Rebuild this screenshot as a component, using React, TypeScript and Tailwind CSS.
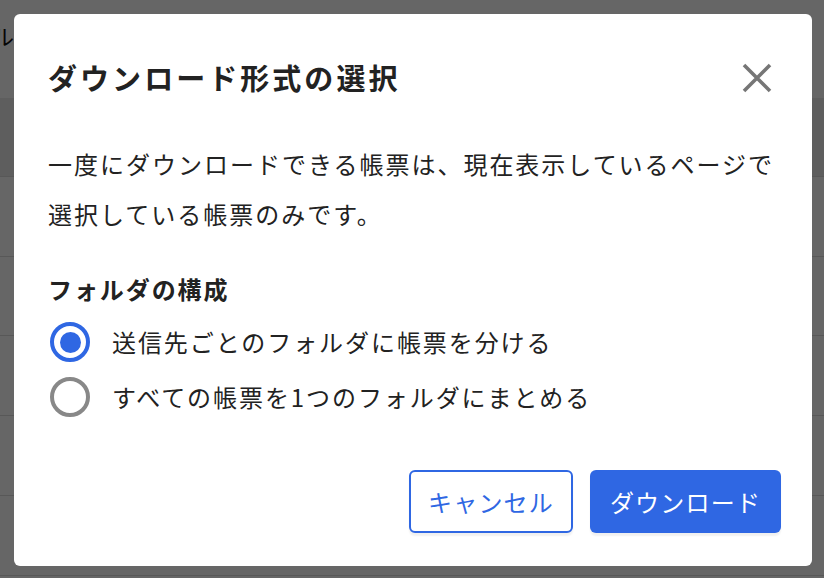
import React, { useState } from 'react'

const font = { fontFamily: '"Noto Sans CJK JP", "Noto Sans", sans-serif' }

const options = [
  { id: 'per', label: '送信先ごとのフォルダに帳票を分ける' },
  { id: 'one', label: 'すべての帳票を1つのフォルダにまとめる' },
]

const App = () => {
  const [selected, setSelected] = useState('per')

  return (
    <div className="relative w-[824px] h-[578px] overflow-hidden bg-white" style={font}>
      {/* page behind the dialog */}
      <div className="flex flex-col w-full">
        <div className="h-[98px] flex items-start pt-[19px]">
          <div className="w-[14px] overflow-hidden flex justify-end">
            <span className="whitespace-nowrap text-[22px] text-[#111]">帳票ファイル</span>
          </div>
        </div>
        <div className="h-[79px] bg-[#ececec] border-b border-[#dcdcdc]" />
        <div className="h-[80px] border-b border-[#dcdcdc]" />
        <div className="h-[79px] border-b border-[#dcdcdc]" />
        <div className="h-[80px] border-b border-[#dcdcdc]" />
        <div className="h-[80px] border-b border-[#dcdcdc]" />
        <div className="h-[80px] border-b border-[#dcdcdc]" />
      </div>

      {/* overlay */}
      <div className="absolute inset-0 bg-black/60 pl-[14px] pt-[14px]">
        <div className="w-[798px] h-[552px] bg-white rounded-md flex flex-col pl-[34px] pr-[31px] pt-[42px] pb-[33px]">
          <div className="flex items-center justify-between h-[44px]">
            <h1 className="text-[29px] font-bold text-[#222] tracking-[0.105em]">
              ダウンロード形式の選択
            </h1>
            <button className="w-[44px] h-[44px] flex items-center justify-center mr-[2px]">
              <svg width="30" height="30" viewBox="0 0 30 30">
                <path d="M2 2 L28 28 M28 2 L2 28" stroke="#767676" strokeWidth="3.6" strokeLinecap="butt" />
              </svg>
            </button>
          </div>

          <p className="mt-[39px] text-[24px] leading-[50px] text-[#222] tracking-[0.083em]">
            一度にダウンロードできる帳票は、現在表示しているページで
            <br />
            選択している帳票のみです。
          </p>

          <h2 className="mt-[32px] text-[24px] leading-[36px] font-bold text-[#222] tracking-[0.08em]">
            フォルダの構成
          </h2>

          <div className="mt-[11px] flex flex-col gap-[7px]">
            {options.map((o) => (
              <label
                key={o.id}
                className="flex items-center gap-[22px] h-[48px] cursor-pointer"
                onClick={() => setSelected(o.id)}
              >
                {selected === o.id ? (
                  <span className="ml-[2px] w-[40px] h-[40px] rounded-full border-4 border-[#2f67e3] flex items-center justify-center">
                    <span className="w-[21px] h-[21px] rounded-full bg-[#2f67e3]" />
                  </span>
                ) : (
                  <span className="ml-[2px] w-[40px] h-[40px] rounded-full border-4 border-[#888888]" />
                )}
                <span className="text-[24px] text-[#222] tracking-[0.08em]">{o.label}</span>
              </label>
            ))}
          </div>

          <div className="mt-auto flex justify-end gap-[17px]">
            <button className="w-[164px] h-[63px] rounded-md border-2 border-[#2f67e3] bg-white text-[#2f67e3] text-[24px] tracking-[0.05em] shadow-[0_3px_2px_rgba(0,0,0,0.06)]">
              キャンセル
            </button>
            <button className="w-[191px] h-[63px] rounded-md bg-[#2f67e3] text-white text-[24px] tracking-[0.05em] shadow-[0_3px_2px_rgba(0,0,0,0.06)]">
              ダウンロード
            </button>
          </div>
        </div>
      </div>
    </div>
  )
}

export default App
